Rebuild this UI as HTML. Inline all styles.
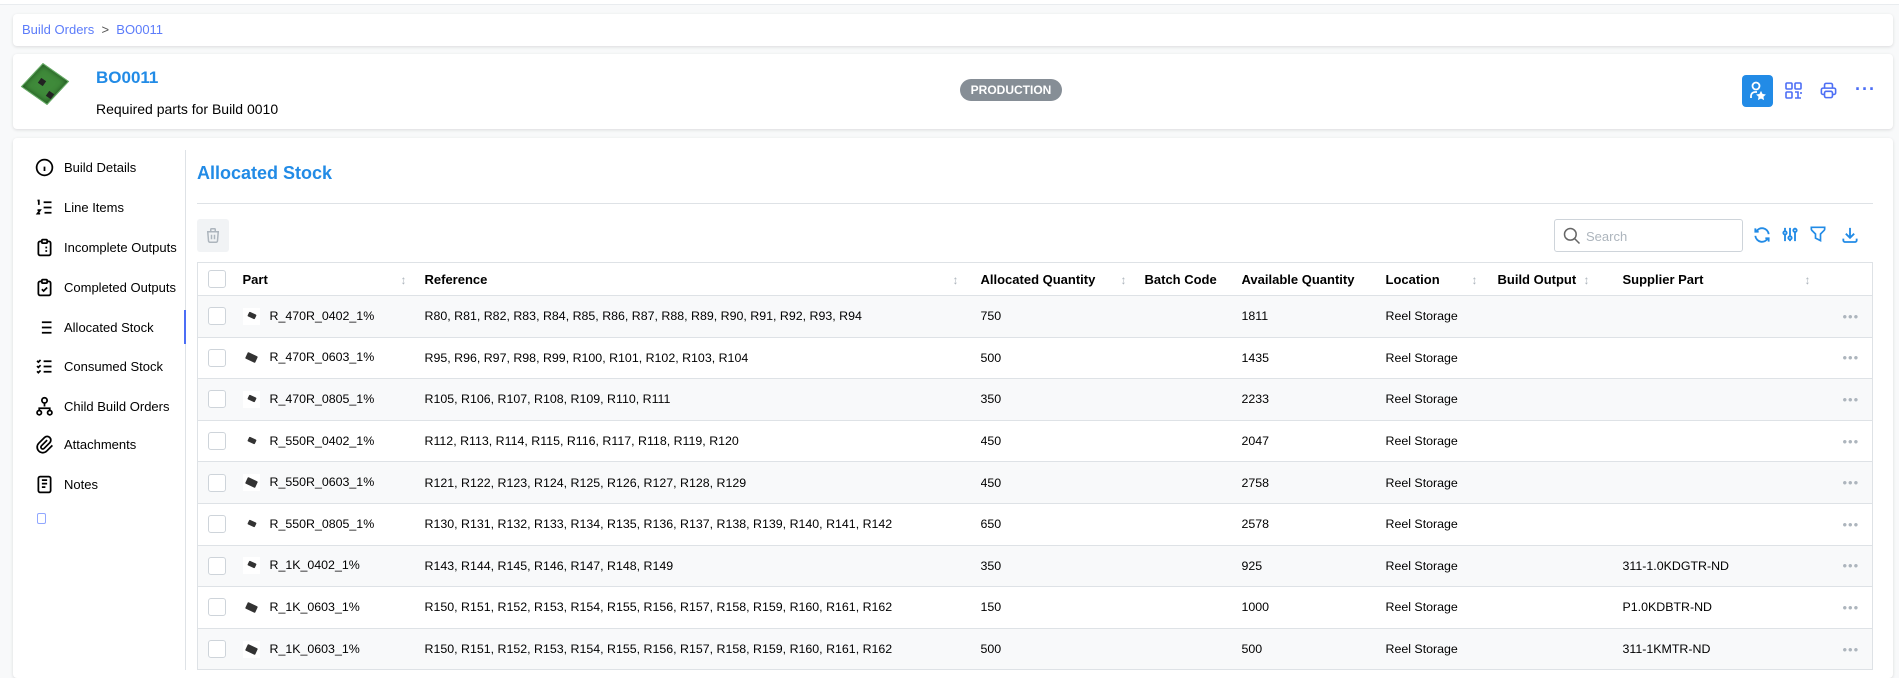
<!DOCTYPE html>
<html><head><meta charset="utf-8"><style>
*{box-sizing:border-box;margin:0;padding:0}
body{width:1899px;height:670px;overflow:hidden;background:#f8f9fa;font-family:"Liberation Sans",sans-serif;font-size:13px;color:#000;position:relative}
.abs{position:absolute}
.card{position:absolute;background:#fff;border-radius:4px;box-shadow:0 1px 3px rgba(0,0,0,.12)}
.nav{position:absolute;left:34px;font-size:13px;color:#000;display:flex;align-items:center}
.nav svg{margin-right:9px}
table{position:absolute;left:197px;top:262px;width:1676px;border-collapse:collapse;border:1px solid #dee2e6;table-layout:fixed}
th{height:33px;text-align:left;font-weight:bold;font-size:13px;border-bottom:1px solid #dee2e6;position:relative}
td{height:41.6px;border-bottom:1px solid #dee2e6;font-size:12.4px;white-space:nowrap;overflow:hidden}
tbody tr:nth-child(odd){background:#f8f9fa}
.cb{display:inline-block;width:18px;height:18px;border:1px solid #ced4da;border-radius:3px;background:#fff;vertical-align:middle}
.srt{position:absolute;top:10px;color:#adb5bd;font-size:12px}
.pimg{display:inline-block;width:17px;height:17px;background:#fff;vertical-align:middle;margin-right:10px;position:relative}
.pimg i{position:absolute;left:5px;top:5px;width:8px;height:5px;background:#333;transform:rotate(25deg);border-radius:1px}
.pimg.b i{left:3px;top:5px;width:11px;height:7px}
.dots{color:#adb5bd;font-size:13px;letter-spacing:1px}
</style></head><body>
<div class="abs" style="left:0;top:0;width:1899px;height:5px;background:#fff;border-bottom:1px solid #e9ecef"></div>
<div class="card" style="left:13px;top:14px;width:1880px;height:32px">
<div class="abs" style="left:9px;top:8px;color:#5c7cfa;font-size:13px">Build Orders &nbsp;<span style="color:#555">&gt;</span>&nbsp; BO0011</div></div>
<div class="card" style="left:13px;top:54px;width:1880px;height:75px">
<div class="abs" style="left:16px;top:14px;width:32px;height:32px;background:#3f8a3a;transform:rotate(35deg) skewX(-8deg);border:1px solid #6a6;box-shadow:inset 0 0 6px #1d4d1d"></div>
<div class="abs" style="left:26px;top:25px;width:6px;height:6px;background:#222;transform:rotate(35deg)"></div>
<div class="abs" style="left:34px;top:38px;width:6px;height:6px;background:#222;transform:rotate(35deg)"></div>
<div class="abs" style="left:83px;top:14px;font-size:17px;font-weight:bold;color:#228be6">BO0011</div>
<div class="abs" style="left:83px;top:47px;font-size:14px">Required parts for Build 0010</div>
<div class="abs" style="left:947px;top:25px;width:102px;height:22px;border-radius:11px;background:#868e96;color:#fff;font-weight:bold;font-size:12px;text-align:center;line-height:22px">PRODUCTION</div>
<div class="abs" style="left:1729px;top:21px;width:31px;height:32px;background:#228be6;border-radius:4px">
<svg width="31" height="32" viewBox="0 0 31 32" fill="none" stroke="#fff" stroke-width="1.8"><circle cx="14" cy="11" r="3.5"/><path d="M9 23v-2a4 4 0 0 1 4-4h2"/><path d="M19 17l1.2 2.4 2.6.4-1.9 1.8.5 2.6-2.4-1.3-2.4 1.3.5-2.6-1.9-1.8 2.6-.4z" fill="#fff" stroke-width="1"/></svg></div>
<svg class="abs" style="left:1772px;top:28px" width="17" height="17" viewBox="0 0 17 17" fill="none" stroke="#4c6ef5" stroke-width="1.6"><rect x="1" y="1" width="6" height="6" rx="1"/><rect x="10" y="1" width="6" height="6" rx="1"/><rect x="1" y="10" width="6" height="6" rx="1"/><path d="M10 10h3v3M16 10v2M10 16h6M13 13v3"/></svg>
<svg class="abs" style="left:1806px;top:27px" width="19" height="19" viewBox="0 0 24 24" fill="none" stroke="#4c6ef5" stroke-width="2"><path d="M17 17h2a2 2 0 0 0 2-2v-4a2 2 0 0 0-2-2H5a2 2 0 0 0-2 2v4a2 2 0 0 0 2 2h2"/><path d="M17 9V5a2 2 0 0 0-2-2H9a2 2 0 0 0-2 2v4"/><rect x="7" y="13" width="10" height="8" rx="2"/></svg>
<div class="abs" style="left:1842px;top:25px;color:#4c6ef5;font-size:18px;font-weight:bold;letter-spacing:1px">···</div>
</div>
<div class="card" style="left:13px;top:138px;width:1880px;height:540px"></div>
<div class="abs" style="left:185px;top:150px;width:1px;height:520px;background:#dee2e6"></div>
<div class="abs" style="left:184px;top:310px;width:2px;height:34px;background:#4c6ef5"></div>
<div class="nav" style="top:157px"><svg width="21" height="21" viewBox="0 0 24 24" fill="none" stroke="#000" stroke-width="2"><circle cx="12" cy="12" r="9"/><path d="M12 11v5M12 8v.01"/></svg>Build Details</div>
<div class="nav" style="top:197px"><svg width="21" height="21" viewBox="0 0 24 24" fill="none" stroke="#000" stroke-width="2"><path d="M11 6h9M11 12h9M12 18h8M4 4h1.5v5M4 15h3l-3 4h3"/></svg>Line Items</div>
<div class="nav" style="top:237px"><svg width="21" height="21" viewBox="0 0 24 24" fill="none" stroke="#000" stroke-width="2"><path d="M9 5H7a2 2 0 0 0-2 2v12a2 2 0 0 0 2 2h10a2 2 0 0 0 2-2V7a2 2 0 0 0-2-2h-2"/><rect x="9" y="3" width="6" height="4" rx="1"/><path d="M9 12h.01M13 12h2M9 16h.01M13 16h2"/></svg>Incomplete Outputs</div>
<div class="nav" style="top:277px"><svg width="21" height="21" viewBox="0 0 24 24" fill="none" stroke="#000" stroke-width="2"><path d="M9 5H7a2 2 0 0 0-2 2v12a2 2 0 0 0 2 2h10a2 2 0 0 0 2-2V7a2 2 0 0 0-2-2h-2"/><rect x="9" y="3" width="6" height="4" rx="1"/><path d="M9 14l2 2 4-4"/></svg>Completed Outputs</div>
<div class="nav" style="top:317px"><svg width="21" height="21" viewBox="0 0 24 24" fill="none" stroke="#000" stroke-width="2"><path d="M9 6h11M9 12h11M9 18h11M5 6v.01M5 12v.01M5 18v.01"/></svg>Allocated Stock</div>
<div class="nav" style="top:356px"><svg width="21" height="21" viewBox="0 0 24 24" fill="none" stroke="#000" stroke-width="2"><path d="M3.5 5.5l1.5 1.5 2.5-2.5M3.5 11.5l1.5 1.5 2.5-2.5M3.5 17.5l1.5 1.5 2.5-2.5M11 6h9M11 12h9M11 18h9"/></svg>Consumed Stock</div>
<div class="nav" style="top:396px"><svg width="21" height="21" viewBox="0 0 24 24" fill="none" stroke="#000" stroke-width="2"><circle cx="12" cy="5" r="3"/><circle cx="6" cy="19" r="2.5"/><circle cx="18" cy="19" r="2.5"/><path d="M12 8v4M6 16.5V14h12v2.5"/></svg>Child Build Orders</div>
<div class="nav" style="top:434px"><svg width="21" height="21" viewBox="0 0 24 24" fill="none" stroke="#000" stroke-width="2"><path d="M15 7l-6.5 6.5a1.5 1.5 0 0 0 3 3L18 10a3 3 0 0 0-6-6l-6.5 6.5a4.5 4.5 0 0 0 9 9L21 13"/></svg>Attachments</div>
<div class="nav" style="top:474px"><svg width="21" height="21" viewBox="0 0 24 24" fill="none" stroke="#000" stroke-width="2"><rect x="5" y="3" width="14" height="18" rx="2"/><path d="M9 7h6M9 11h6M9 15h4"/></svg>Notes</div>
<div class="abs" style="left:37px;top:513px;width:9px;height:11px;border:1px solid #91a7ff;border-radius:2px"></div>
<div class="abs" style="left:197px;top:163px;font-size:18px;font-weight:bold;color:#228be6">Allocated Stock</div>
<div class="abs" style="left:197px;top:203px;width:1676px;height:1px;background:#dee2e6"></div>
<div class="abs" style="left:197px;top:219px;width:32px;height:33px;background:#f1f3f5;border-radius:3px">
<svg style="margin:7px 0 0 7px" width="18" height="19" viewBox="0 0 24 24" fill="none" stroke="#adb5bd" stroke-width="2"><path d="M4 7h16M10 11v6M14 11v6M5 7l1 12a2 2 0 0 0 2 2h8a2 2 0 0 0 2-2l1-12M9 7V4a1 1 0 0 1 1-1h4a1 1 0 0 1 1 1v3"/></svg></div>
<div class="abs" style="left:1554px;top:219px;width:189px;height:33px;border:1px solid #ced4da;border-radius:3px;background:#fff">
<svg class="abs" style="left:7px;top:6px" width="20" height="20" viewBox="0 0 24 24" fill="none" stroke="#666" stroke-width="1.8"><circle cx="10" cy="10" r="7"/><path d="M21 21l-6-6"/></svg>
<span class="abs" style="left:31px;top:9px;color:#adb5bd;font-size:13px">Search</span></div>
<svg class="abs" style="left:1752px;top:225px" width="20" height="20" viewBox="0 0 24 24" fill="none" stroke="#228be6" stroke-width="2.2"><path d="M20 11A8 8 0 0 0 5 8M4 4v4h4M4 13a8 8 0 0 0 15 3M20 20v-4h-4"/></svg>
<svg class="abs" style="left:1780px;top:224px" width="20" height="21" viewBox="0 0 24 24" fill="none" stroke="#228be6" stroke-width="2.2"><circle cx="6" cy="10" r="2"/><circle cx="12" cy="16" r="2"/><circle cx="18" cy="7" r="2"/><path d="M6 4v4M6 12v8M12 4v10M12 18v2M18 4v1M18 9v11"/></svg>
<svg class="abs" style="left:1808px;top:224px" width="20" height="20" viewBox="0 0 24 24" fill="none" stroke="#228be6" stroke-width="2"><path d="M4 4h16v2.2a2 2 0 0 1-.6 1.4L15 12v8l-6-3v-5L4.5 7.5A2 2 0 0 1 4 6.2z"/></svg>
<svg class="abs" style="left:1840px;top:224px" width="20" height="21" viewBox="0 0 24 24" fill="none" stroke="#228be6" stroke-width="2.2"><path d="M4 17v2a2 2 0 0 0 2 2h12a2 2 0 0 0 2-2v-2M7 11l5 5 5-5M12 4v12"/></svg>
<table>
<colgroup><col style="width:45px"><col style="width:182px"><col style="width:556px"><col style="width:164px"><col style="width:97px"><col style="width:144px"><col style="width:112px"><col style="width:125px"><col style="width:220px"><col></colgroup>
<thead><tr><th style="padding-left:10px"><span class="cb"></span></th><th>Part<span class="srt" style="left:158px">↕</span></th><th>Reference<span class="srt" style="left:528px">↕</span></th><th>Allocated Quantity<span class="srt" style="left:140px">↕</span></th><th>Batch Code</th><th>Available Quantity</th><th>Location<span class="srt" style="left:86px">↕</span></th><th>Build Output<span class="srt" style="left:86px">↕</span></th><th>Supplier Part<span class="srt" style="left:182px">↕</span></th><th></th></tr></thead>
<tbody>
<tr><td style="padding-left:10px"><span class="cb"></span></td><td><span class="pimg"><i></i></span>R_470R_0402_1%</td><td>R80, R81, R82, R83, R84, R85, R86, R87, R88, R89, R90, R91, R92, R93, R94</td><td>750</td><td></td><td>1811</td><td>Reel Storage</td><td></td><td></td><td class="dots">•••</td></tr>
<tr><td style="padding-left:10px"><span class="cb"></span></td><td><span class="pimg b"><i></i></span>R_470R_0603_1%</td><td>R95, R96, R97, R98, R99, R100, R101, R102, R103, R104</td><td>500</td><td></td><td>1435</td><td>Reel Storage</td><td></td><td></td><td class="dots">•••</td></tr>
<tr><td style="padding-left:10px"><span class="cb"></span></td><td><span class="pimg"><i></i></span>R_470R_0805_1%</td><td>R105, R106, R107, R108, R109, R110, R111</td><td>350</td><td></td><td>2233</td><td>Reel Storage</td><td></td><td></td><td class="dots">•••</td></tr>
<tr><td style="padding-left:10px"><span class="cb"></span></td><td><span class="pimg"><i></i></span>R_550R_0402_1%</td><td>R112, R113, R114, R115, R116, R117, R118, R119, R120</td><td>450</td><td></td><td>2047</td><td>Reel Storage</td><td></td><td></td><td class="dots">•••</td></tr>
<tr><td style="padding-left:10px"><span class="cb"></span></td><td><span class="pimg b"><i></i></span>R_550R_0603_1%</td><td>R121, R122, R123, R124, R125, R126, R127, R128, R129</td><td>450</td><td></td><td>2758</td><td>Reel Storage</td><td></td><td></td><td class="dots">•••</td></tr>
<tr><td style="padding-left:10px"><span class="cb"></span></td><td><span class="pimg"><i></i></span>R_550R_0805_1%</td><td>R130, R131, R132, R133, R134, R135, R136, R137, R138, R139, R140, R141, R142</td><td>650</td><td></td><td>2578</td><td>Reel Storage</td><td></td><td></td><td class="dots">•••</td></tr>
<tr><td style="padding-left:10px"><span class="cb"></span></td><td><span class="pimg"><i></i></span>R_1K_0402_1%</td><td>R143, R144, R145, R146, R147, R148, R149</td><td>350</td><td></td><td>925</td><td>Reel Storage</td><td></td><td>311-1.0KDGTR-ND</td><td class="dots">•••</td></tr>
<tr><td style="padding-left:10px"><span class="cb"></span></td><td><span class="pimg b"><i></i></span>R_1K_0603_1%</td><td>R150, R151, R152, R153, R154, R155, R156, R157, R158, R159, R160, R161, R162</td><td>150</td><td></td><td>1000</td><td>Reel Storage</td><td></td><td>P1.0KDBTR-ND</td><td class="dots">•••</td></tr>
<tr><td style="padding-left:10px"><span class="cb"></span></td><td><span class="pimg b"><i></i></span>R_1K_0603_1%</td><td>R150, R151, R152, R153, R154, R155, R156, R157, R158, R159, R160, R161, R162</td><td>500</td><td></td><td>500</td><td>Reel Storage</td><td></td><td>311-1KMTR-ND</td><td class="dots">•••</td></tr>
</tbody></table>
</body></html>
